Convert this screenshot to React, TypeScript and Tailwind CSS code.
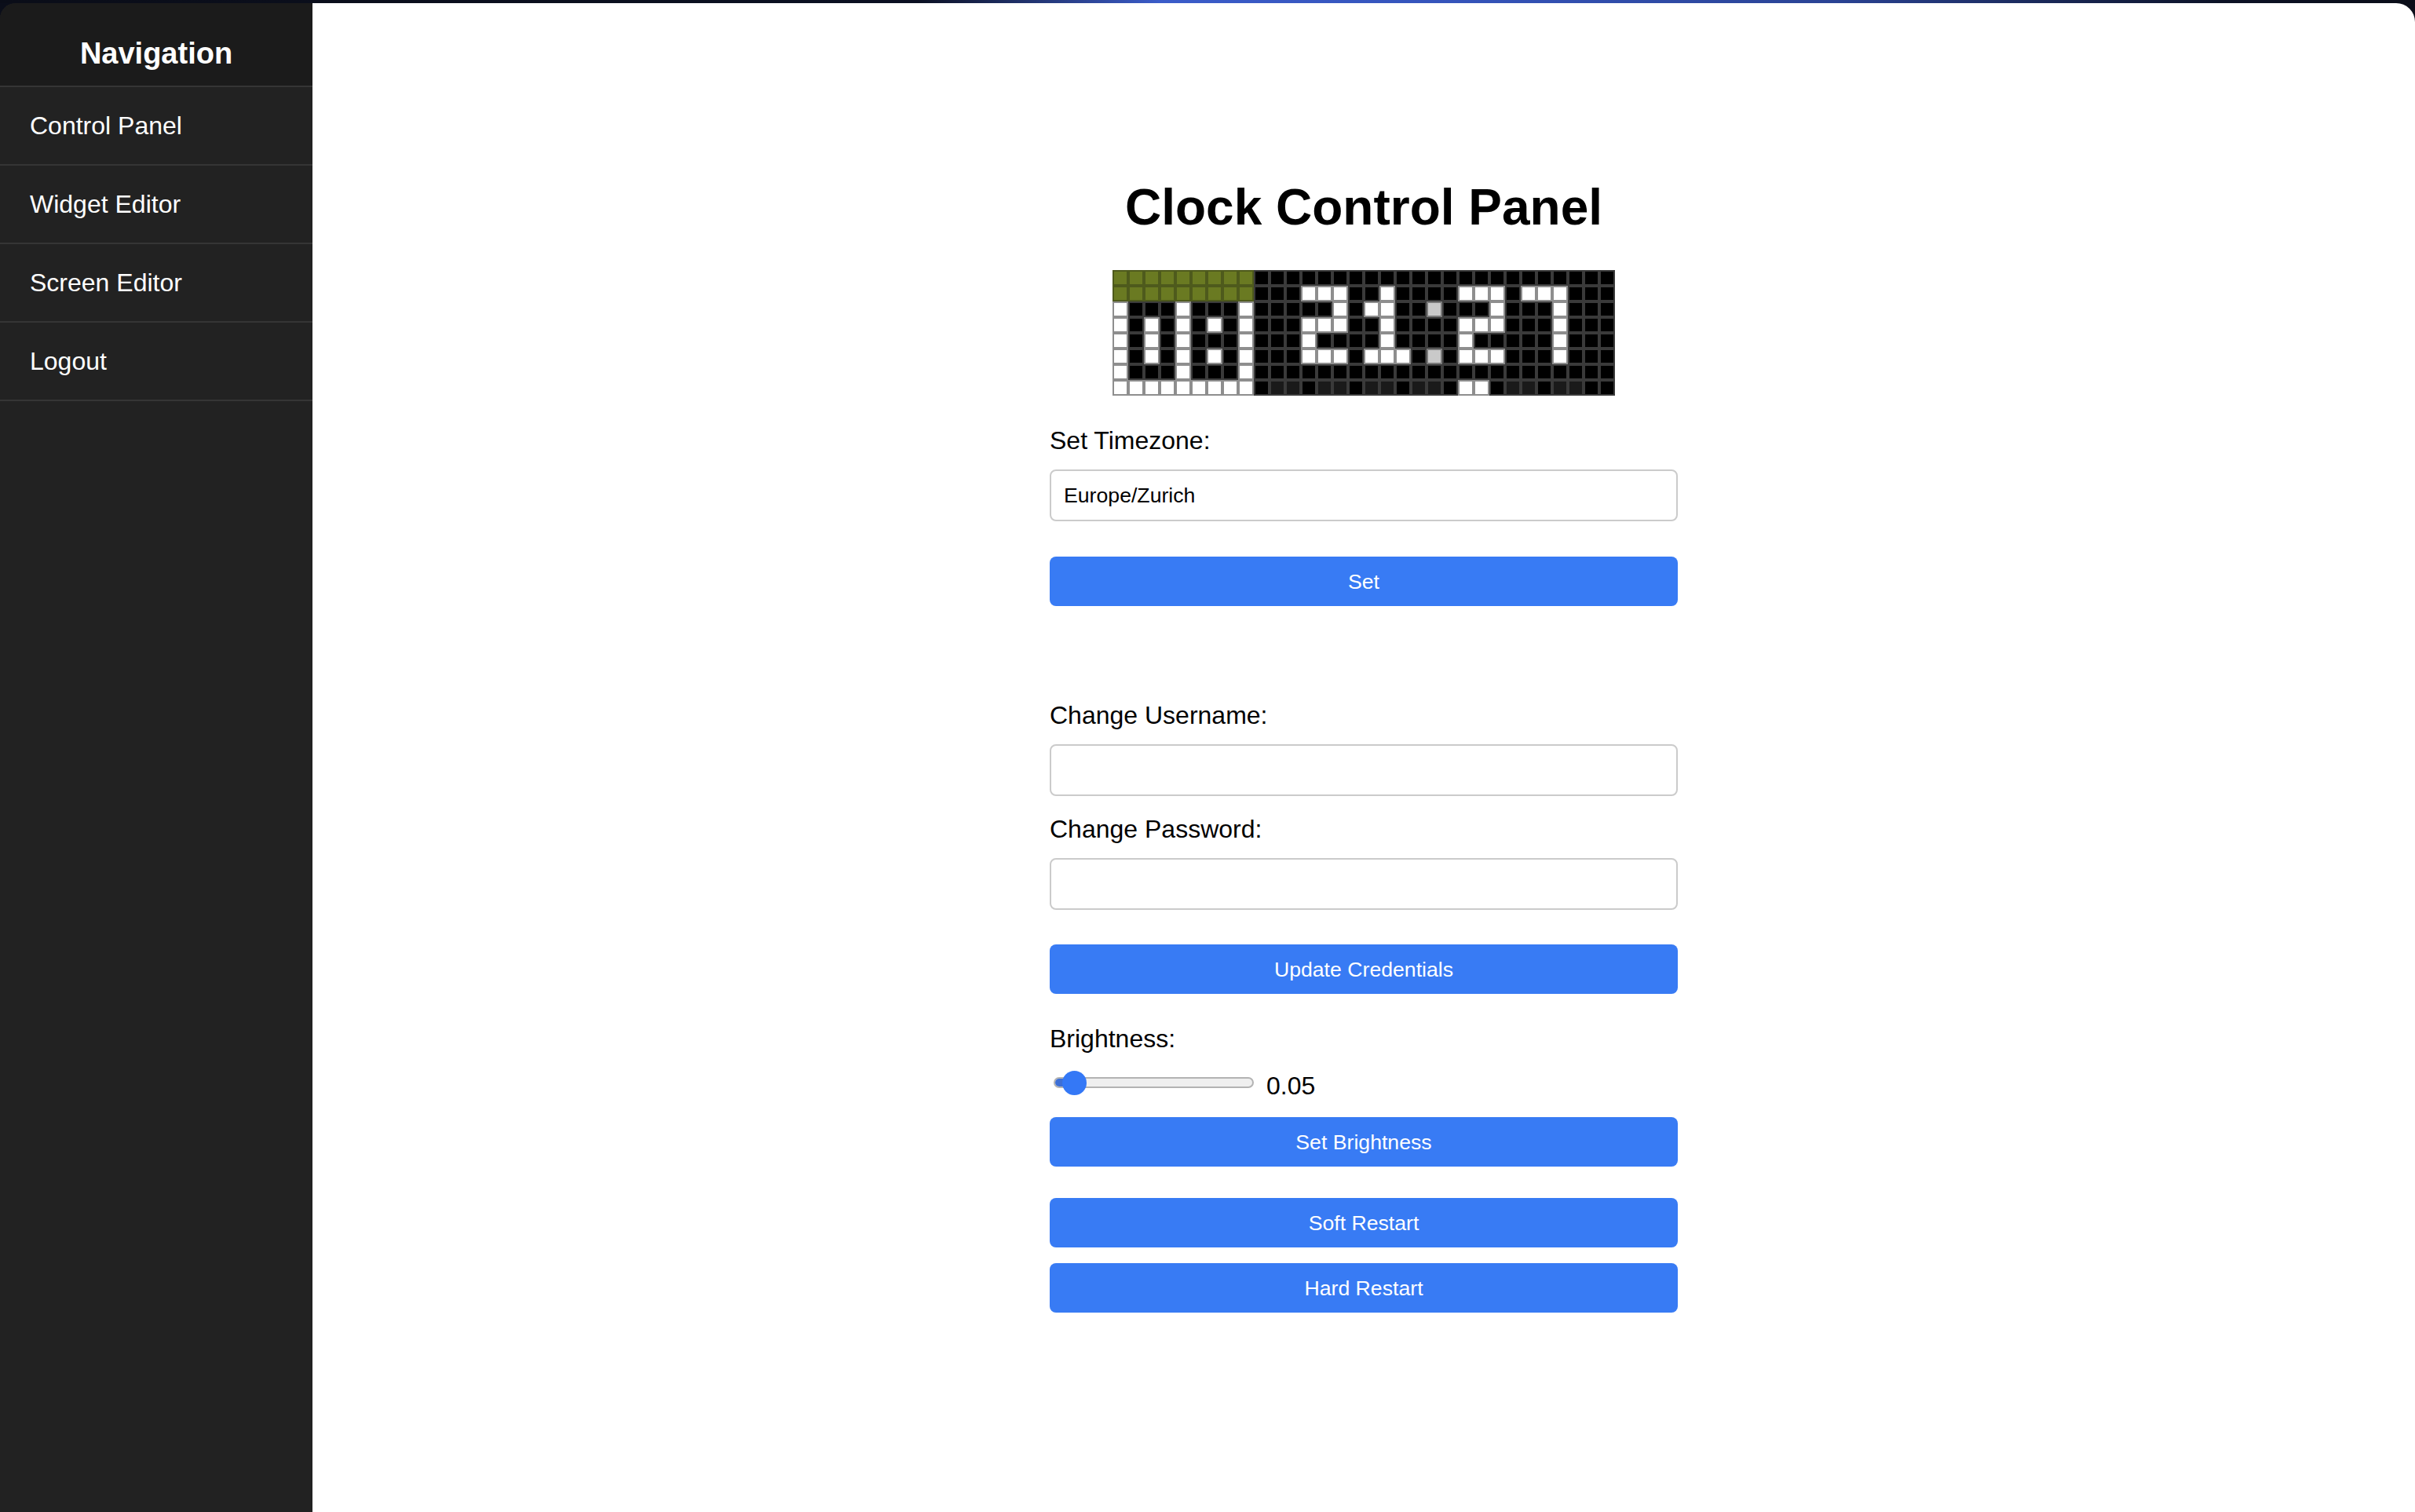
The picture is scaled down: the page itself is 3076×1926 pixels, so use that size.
import { useState } from "react";

// 32 x 8 LED matrix: g = olive, w = lit, s = dim grey, d = faint, k = off
const MATRIX = [
  "gggggggggkkkkkkkkkkkkkkkkkkkkkkk",
  "gggggggggkkkwwwkkwkkkkwwwkwwwkkk",
  "wkkkwkkkwkkkkkwkwwkkskkkwkkkwkkk",
  "wkwkwkwkwkkkwwwkkwkkkkwwwkkkwkkk",
  "wkwkwkkkwkkkwkkkkwkkkkwkkkkkwkkk",
  "wkwkwkwkwkkkwwwkwwwkskwwwkkkwkkk",
  "wkkkwkkkwkkkkkkkkkkkkkkkkkkkkkkk",
  "wwwwwwwwwkddkddkddkddkwwkddkddkk",
];

const cellStyles: Record<string, string> = {
  g: "bg-[#6a7a22] border-[#4e5a1c]",
  w: "bg-white border-[#8e8e8e]",
  s: "bg-[#c9c9c9] border-[#7a7a7a]",
  d: "bg-[#1a1a1a] border-[#3a3a3a]",
  k: "bg-black border-[#3a3a3a]",
};

const navItems = ["Control Panel", "Widget Editor", "Screen Editor", "Logout"];

function LedMatrix() {
  return (
    <div className="mx-auto mt-[43px] grid w-[640px] grid-cols-[repeat(32,20px)]">
      {MATRIX.flatMap((row, r) =>
        row.split("").map((c, i) => (
          <div key={`${r}-${i}`} className={`h-[20px] w-[20px] border-2 ${cellStyles[c] ?? cellStyles.k}`} />
        )),
      )}
    </div>
  );
}

function Label({ children, className = "" }: { children: string; className?: string }) {
  return <label className={`block text-[32px] leading-[37px] text-black ${className}`}>{children}</label>;
}

function TextInput({ value, type = "text" }: { value?: string; type?: string }) {
  const [text, setText] = useState(value ?? "");
  return (
    <input
      type={type}
      value={text}
      onChange={(e) => setText(e.target.value)}
      className="mt-[18px] block h-[66px] w-full rounded-[8px] border-2 border-[#cbcbcb] bg-white px-[16px] font-['Liberation_Sans',Arial,sans-serif] text-[26.67px] text-black outline-none"
    />
  );
}

function BlueButton({ children, className = "" }: { children: string; className?: string }) {
  return (
    <button
      type="button"
      className={`block h-[63px] w-full rounded-[8px] bg-[#387bf4] text-center font-['Liberation_Sans',Arial,sans-serif] text-[26.67px] text-white ${className}`}
    >
      {children}
    </button>
  );
}

export default function App() {
  return (
    <div className="flex h-screen w-full flex-col overflow-hidden bg-[#0b0e1a] font-['Liberation_Sans',Arial,sans-serif]">
      <div className="h-[4px] w-full shrink-0 bg-[linear-gradient(to_right,#0a0d18_0%,#0b1022_38%,#3b5cc9_48%,#3554bb_60%,#2a4394_76%,#0c1226_92%,#0a0d18_100%)]" />
      <div className="flex min-h-0 flex-1 overflow-hidden rounded-tl-[20px] rounded-tr-[24px]">
        <aside className="flex w-[398px] shrink-0 flex-col bg-[#222222]">
          <div className="h-[107px] border-b-2 border-[#353535] bg-[#1b1b1b] pt-[42px] text-center text-[38px] font-bold leading-[44px] text-white">
            Navigation
          </div>
          {navItems.map((item) => (
            <a
              key={item}
              href="#"
              className="block h-[100px] border-b-2 border-[#353535] pl-[38px] pt-[31px] text-[32px] leading-[37px] text-white"
            >
              {item}
            </a>
          ))}
        </aside>
        <main className="min-w-0 flex-1 bg-white pt-[223px]">
          <h1 className="text-center text-[64px] font-bold leading-[74px] text-black">Clock Control Panel</h1>
          <LedMatrix />
          <div className="mx-auto w-[800px]">
            <Label className="mt-[39px]">Set Timezone:</Label>
            <TextInput value="Europe/Zurich" />
            <BlueButton className="mt-[45px]">Set</BlueButton>

            <Label className="mt-[121px]">Change Username:</Label>
            <TextInput />
            <Label className="mt-[24px]">Change Password:</Label>
            <TextInput type="password" />
            <BlueButton className="mt-[44px]">Update Credentials</BlueButton>

            <Label className="mt-[39px]">Brightness:</Label>
            <div className="flex items-start">
              <div className="relative ml-[5px] mt-[22px] h-[30px] w-[255px]">
                <div className="absolute left-0 right-0 top-[8px] h-[14px] overflow-hidden rounded-full border-2 border-[#b3b3b3] bg-[#efefef]">
                  <div className="h-full w-[28px] bg-[#3d6fd6]" />
                </div>
                <div className="absolute left-[11px] top-0 h-[31px] w-[31px] rounded-full bg-[#3478f6]" />
              </div>
              <span className="ml-[16px] mt-[23px] text-[32px] leading-[37px] text-black">0.05</span>
            </div>
            <BlueButton className="mt-[21px]">Set Brightness</BlueButton>
            <BlueButton className="mt-[40px]">Soft Restart</BlueButton>
            <BlueButton className="mt-[20px]">Hard Restart</BlueButton>
          </div>
        </main>
      </div>
    </div>
  );
}
